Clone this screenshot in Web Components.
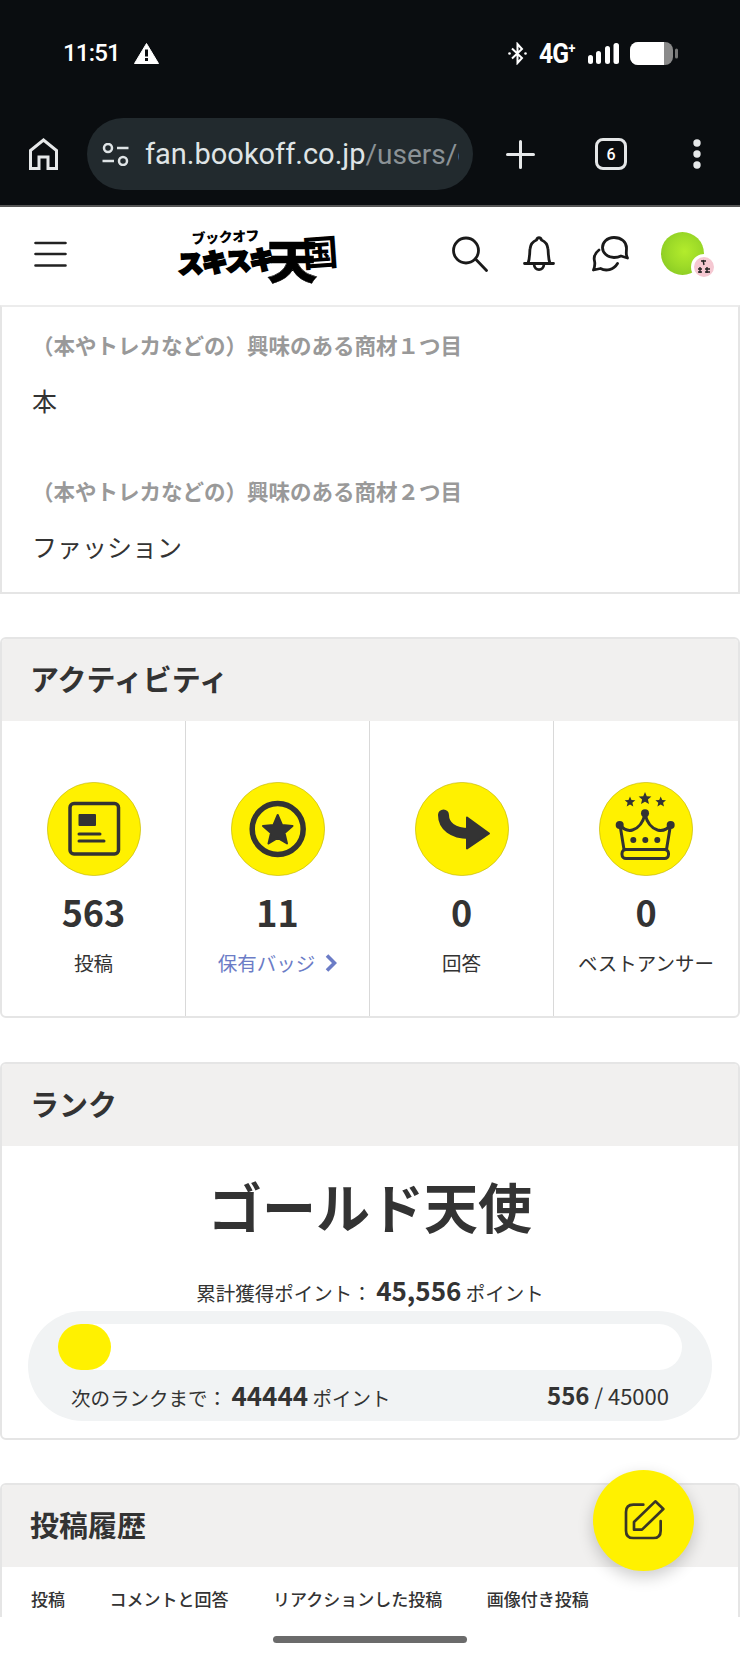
<!DOCTYPE html>
<html lang="ja">
<head>
<meta charset="utf-8">
<title>スキスキ天国</title>
<style>
    html, body { margin: 0; padding: 0; background: #fff; }
    body {
        width: 740px;
        height: 1661px;
        overflow: hidden;
        font-family: "Noto Sans CJK JP", "Noto Sans", sans-serif;
        color: #333;
    }
    #page { position: relative; display: flex; flex-direction: column; width: 740px; height: 1661px; overflow: hidden; }
    #scroll { display: flex; flex-direction: column; height: 1312px; overflow: hidden; flex: none; }
    browser-chrome, site-header { flex: none; }
    info-card, rank-card { margin-bottom: 43px; }
    activity-card { margin-bottom: 44px; }
</style>
</head>
<body>
<div id="page">
    <browser-chrome></browser-chrome>
    <site-header></site-header>
    <div id="scroll">
        <info-card>
            <info-row label="（本やトレカなどの）興味のある商材１つ目" value="本"></info-row>
            <info-row label="（本やトレカなどの）興味のある商材２つ目" value="ファッション"></info-row>
        </info-card>
        <activity-card>
            <activity-stat count="563" label="投稿" icon="post"></activity-stat>
            <activity-stat count="11" label="保有バッジ" icon="badge" link></activity-stat>
            <activity-stat count="0" label="回答" icon="answer"></activity-stat>
            <activity-stat count="0" label="ベストアンサー" icon="crown"></activity-stat>
        </activity-card>
        <rank-card></rank-card>
        <history-card></history-card>
    </div>
    <home-bar></home-bar>
    <post-fab></post-fab>
</div>

<script>
class BrowserChrome extends HTMLElement {
    constructor() {
        super();
        this.attachShadow({ mode: 'open' });
    }

    connectedCallback() {
        this.shadowRoot.innerHTML = /*html*/`
            <style>
                :host {
                    display: block;
                    height: 205px;
                    background: #0a0d10;
                    border-bottom: 2px solid #555;
                    font-family: Roboto, sans-serif;
                    color: #fff;
                }
                .status {
                    display: flex;
                    align-items: center;
                    height: 30px;
                    padding: 38px 0 0 63px;
                }
                .time { font-size: 24px; font-weight: 500; width: 71px; letter-spacing: -0.8px; }
                .right { display: flex; align-items: center; margin-left: auto; margin-right: 62px; }
                .net {
                    font-size: 28px;
                    font-weight: 700;
                    margin: 0 10px 0 12px;
                    width: 39px;
                    white-space: nowrap;
                    letter-spacing: -1px;
                    transform: scaleX(0.88);
                    transform-origin: left center;
                }
                .net sup { font-size: 15px; line-height: 0; vertical-align: 10px; }
                svg { display: block; flex: none; }
                .bar {
                    display: flex;
                    align-items: center;
                    height: 72px;
                    margin-top: 50px;
                    padding-left: 29px;
                }
                .pill {
                    display: flex;
                    align-items: center;
                    flex: none;
                    box-sizing: border-box;
                    width: 386px;
                    height: 72px;
                    margin-left: 29px;
                    padding-left: 15px;
                    border-radius: 36px;
                    background: #222a2e;
                }
                .url {
                    width: 314px;
                    margin-left: 16px;
                    overflow: hidden;
                    white-space: nowrap;
                    font-size: 29px;
                    color: #dfe4e6;
                }
                .url span { color: #8b9296; font-size: 28px; }
                .plus { margin-left: 33px; }
                .tabs {
                    display: flex;
                    align-items: center;
                    justify-content: center;
                    box-sizing: border-box;
                    width: 32px;
                    height: 32px;
                    margin-left: 60px;
                    border: 3px solid #e4e6e7;
                    border-radius: 8px;
                    font-size: 16px;
                    font-weight: 500;
                }
                .dots { margin-left: 66px; }
            </style>
            <div class="status">
                <div class="time">11:51</div>
                <svg width="25" height="21" viewBox="0 0 25 21"><path d="M12.500 0.500 L24.500 20.500 H0.500 Z" fill="#fff" stroke="#fff" stroke-linejoin="round"/><rect x="11" y="6.500" width="3" height="7" fill="#0a0d10"/><rect x="11" y="15" width="3" height="3" fill="#0a0d10"/></svg>
                <div class="right">
                    <svg width="19" height="23" viewBox="0 0 19 23" fill="none" stroke="#fff" stroke-width="2"><path d="M4 6.500 L14 16 L9.500 21 V2 L14 7 L4 16.500"/><circle cx="1.500" cy="11.500" r="1.300" fill="#fff" stroke="none"/><circle cx="17.500" cy="11.500" r="1.300" fill="#fff" stroke="none"/></svg>
                    <div class="net">4G<sup>+</sup></div>
                    <svg width="31" height="21" viewBox="0 0 31 21" fill="#fff"><rect x="0" y="12" width="5" height="9" rx="2.500"/><rect x="8" y="8" width="5" height="13" rx="2.500"/><rect x="17" y="3" width="5" height="18" rx="2.500"/><rect x="25.500" y="0" width="5.500" height="21" rx="2.500"/></svg>
                    <svg width="48" height="23" viewBox="0 0 48 23" style="margin-left:11px"><rect width="43" height="23" rx="8" fill="#8a8a8a"/><path d="M8 0 H34 V23 H8 A8 8 0 0 1 0 15 V8 A8 8 0 0 1 8 0 Z" fill="#fff"/><rect x="45" y="6.500" width="3" height="10" rx="1.500" fill="#777"/></svg>
                </div>
            </div>
            <div class="bar">
                <svg width="29" height="32" viewBox="0 0 29 32" fill="none" stroke="#e6e8e9" stroke-width="3"><path d="M1.500 30.500 V12.500 L14.500 2 L27.500 12.500 V30.500 H19 V19 H10 V30.500 Z" stroke-linejoin="miter"/></svg>
                <div class="pill">
                    <svg width="27" height="23" viewBox="0 0 27 23" fill="none" stroke="#dfe4e6" stroke-width="2.500"><circle cx="6" cy="5" r="4"/><path d="M15 5 H26.500"/><path d="M0.500 18 H12"/><circle cx="21" cy="18" r="4"/></svg>
                    <div class="url">fan.bookoff.co.jp<span>/users/c</span></div>
                </div>
                <svg class="plus" width="29" height="29" viewBox="0 0 29 29" stroke="#e6e8e9" stroke-width="3" stroke-linecap="round"><path d="M14.500 1.500 V27.500 M1.500 14.500 H27.500"/></svg>
                <div class="tabs">6</div>
                <svg class="dots" width="8" height="30" viewBox="0 0 8 30" fill="#e6e8e9"><circle cx="4" cy="4" r="3.700"/><circle cx="4" cy="15" r="3.700"/><circle cx="4" cy="26" r="3.700"/></svg>
            </div>
        `;
    }
}

class SiteHeader extends HTMLElement {
    constructor() {
        super();
        this.attachShadow({ mode: 'open' });
    }

    connectedCallback() {
        this.shadowRoot.innerHTML = /*html*/`
            <style>
                :host {
                    display: flex;
                    align-items: center;
                    box-sizing: border-box;
                    height: 98px;
                    background: #fff;
                    padding-left: 34px;
                    color: #111;
                }
                svg { display: block; flex: none; }
                .logo {
                    flex: none;
                    width: 160px;
                    height: 56px;
                    margin-left: 111px;
                    margin-top: 6px;
                    font-weight: 900;
                    color: #000;
                    white-space: nowrap;
                    line-height: 1;
                }
                .logo .top {
                    display: block;
                    font-size: 14px;
                    letter-spacing: -0.500px;
                    margin-left: 14px;
                    height: 14px;
                    transform: rotate(-3deg);
                    transform-origin: left bottom;
                }
                .logo .main { display: flex; align-items: flex-start; }
                .logo .suki {
                    font-size: 25px;
                    letter-spacing: -0.800px;
                    margin-top: 3px;
                    width: 93px;
                    -webkit-text-stroke: 2.500px #000;
                    transform: rotate(-3deg);
                }
                .logo .ten {
                    font-size: 46px;
                    margin-top: -10px;
                    margin-left: -4px;
                    width: 34px;
                    transform: scaleX(1.100);
                    transform-origin: left center;
                    -webkit-text-stroke: 0.500px #000;
                }
                .logo .koku {
                    font-size: 36px;
                    margin-top: -11px;
                    margin-left: 1px;
                    transform: rotate(-4deg);
                    font-weight: 700;
                    height: 33px;
                    line-height: 33px;
                }
                .tools { display: flex; align-items: center; margin-left: 114px; margin-top: -5px; }
                .avatar {
                    position: relative;
                    flex: none;
                    width: 43px;
                    height: 43px;
                    margin-left: 32px;
                    border-radius: 50%;
                    background: radial-gradient(circle at 55% 45%, #b3ec2c 0%, #9edb28 45%, #7fc221 100%);
                }
                .badge {
                    position: absolute;
                    left: 30px;
                    top: 22px;
                    width: 26px;
                    height: 26px;
                    box-sizing: border-box;
                    border: 3px solid #fff;
                    border-radius: 50%;
                    background: #f5c8d2;
                }
                .badge svg { width: 20px; height: 20px; }
            </style>
            <svg width="33" height="26" viewBox="0 0 33 26" stroke="#222" stroke-width="2.600" stroke-linecap="round" style="margin-top:-5px"><path d="M1.500 2 H31.500 M1.500 13 H31.500 M1.500 24.500 H31.500"/></svg>
            <div class="logo">
                <span class="top">ブックオフ</span>
                <span class="main"><span class="suki">スキスキ</span><span class="ten">天</span><span class="koku">国</span></span>
            </div>
            <div class="tools">
                <svg width="36" height="36" viewBox="0 0 36 36" fill="none" stroke="#1a1a1a" stroke-width="2.800" stroke-linecap="round"><circle cx="14" cy="14.500" r="12.500"/><path d="M23.500 23 L34.500 34.500"/></svg>
                <svg style="margin-left:35px" width="32" height="36" viewBox="0 0 32 36" fill="none" stroke="#1a1a1a" stroke-width="2.800" stroke-linecap="round" stroke-linejoin="round"><path d="M1.500 27.500 H30.500 M5 27.500 C7 22 6.500 17 7 13 C7.500 8 11 5 13.500 4 C14.500 1 17.500 1 18.500 4 C21 5 24.500 8 25 13 C25.500 17 25 22 27 27.500"/><path d="M11 28 C11.500 35.500 20.500 35.500 21 28"/></svg>
                <svg style="margin-left:37px" width="37" height="36" viewBox="0 0 37 36" fill="none" stroke="#1a1a1a" stroke-width="2.800" stroke-linecap="round" stroke-linejoin="round"><path d="M22 1.500 C14.500 1.500 10.500 7 10.500 11.500 C10.500 17 15.500 21.500 22 21.500 C25 21.500 27 21 29 20 L35.500 22 C33.500 19 34.500 17 34.500 12 C34.500 6 29.500 1.500 22 1.500 Z"/><path d="M7 14 C3 17 1.500 21 2.500 25 C3 27 3 30 1.500 34 L8.500 32.500 C14 35.500 21.500 34 25.500 27.500"/></svg>
                <div class="avatar">
                    <div class="badge"><svg viewBox="0 0 20 20" stroke="#222" stroke-width="1.400" fill="none"><path d="M9 3 L10 8 M7 4 H12 M4 12 H8 M4 15 H8 M11 12 H16 M11 15 H16 M6 10 V16 M13 10 V16"/></svg></div>
                </div>
            </div>
        `;
    }
}

const cardStyles = /*css*/`
    :host {
        display: block;
        flex: none;
        box-sizing: border-box;
        background: #fff;
        border: 2px solid #e5e5e5;
        border-radius: 6px;
        overflow: hidden;
    }
    h2 {
        display: flex;
        align-items: center;
        box-sizing: border-box;
        height: 82px;
        margin: 0;
        padding: 0 0 4px 28px;
        background: #f1f0ef;
        font-size: 29px;
        font-weight: 700;
        color: #333;
    }
`;

class InfoCard extends HTMLElement {
    constructor() {
        super();
        this.attachShadow({ mode: 'open' });
    }

    connectedCallback() {
        this.shadowRoot.innerHTML = /*html*/`
            <style>
                :host {
                    display: flex;
                    flex-direction: column;
                    gap: 56px;
                    flex: none;
                    box-sizing: border-box;
                    height: 289px;
                    padding: 23px 30px 0;
                    background: #fff;
                    border: 2px solid #e5e5e5;
                    border-top-color: #ececec;
                }
            </style>
            <slot></slot>
        `;
    }
}

class InfoRow extends HTMLElement {
    constructor() {
        super();
        this.attachShadow({ mode: 'open' });
    }

    connectedCallback() {
        this.shadowRoot.innerHTML = /*html*/`
            <style>
                :host { display: block; }
                .label { font-size: 21.500px; line-height: 30px; font-weight: 700; color: #999; white-space: nowrap; }
                .value { font-size: 25px; line-height: 40px; margin-top: 20px; color: #333; }
            </style>
            <div class="label">${this.getAttribute('label')}</div>
            <div class="value">${this.getAttribute('value')}</div>
        `;
    }
}

class ActivityCard extends HTMLElement {
    constructor() {
        super();
        this.attachShadow({ mode: 'open' });
    }

    connectedCallback() {
        this.shadowRoot.innerHTML = /*html*/`
            <style>
                ${cardStyles}
                :host { height: 381px; }
                .grid { display: grid; grid-template-columns: repeat(4, 1fr); height: 297px; }
            </style>
            <h2>アクティビティ</h2>
            <div class="grid"><slot></slot></div>
        `;
    }
}

const statIcons = {
    post: /*html*/`
        <rect x="23" y="21.500" width="48.500" height="50.500" rx="4" fill="none" stroke="#333" stroke-width="3.500"/>
        <rect x="31.500" y="32" width="17.500" height="12" rx="1" fill="#333"/>
        <path d="M32 52 H53 M32 59 H57" stroke="#333" stroke-width="3" stroke-linecap="round"/>`,
    badge: /*html*/`
        <circle cx="46.700" cy="47" r="25.500" fill="none" stroke="#333" stroke-width="5.500"/>
        <path d="M46.700 33 L51 43 L61.500 44 L53.500 51 L56 61.500 L46.700 56 L37.500 61.500 L40 51 L32 44 L42.500 43 Z" fill="#333" stroke="#333" stroke-width="2" stroke-linejoin="round"/>`,
    answer: /*html*/`
        <path d="M28.500 33 C28.500 44 38 51.500 54 51.500" fill="none" stroke="#333" stroke-width="11" stroke-linecap="round"/>
        <path d="M52 35.500 L74 51.500 L52 66.500 Z" fill="#333" stroke="#333" stroke-width="2" stroke-linejoin="round"/>`,
    crown: /*html*/`
        <g fill="#333">
            <path d="M31 14.500 L32.500 18 L36.300 18.300 L33.400 20.800 L34.300 24.500 L31 22.500 L27.700 24.500 L28.600 20.800 L25.700 18.300 L29.500 18 Z"/>
            <path d="M46 10 L47.800 14.200 L52.400 14.600 L48.900 17.600 L50 22 L46 19.700 L42 22 L43.100 17.600 L39.600 14.600 L44.200 14.200 Z"/>
            <path d="M61.700 14.500 L63.200 18 L67 18.300 L64.100 20.800 L65 24.500 L61.700 22.500 L58.400 24.500 L59.300 20.800 L56.400 18.300 L60.200 18 Z"/>
            <circle cx="46" cy="31.300" r="4"/><circle cx="20.700" cy="43" r="4"/><circle cx="71.700" cy="43" r="4"/>
            <circle cx="34.300" cy="58" r="3"/><circle cx="46.300" cy="58" r="3"/><circle cx="58.300" cy="58" r="3"/>
        </g>
        <path d="M21 43 Q27 50 33.500 48 Q43 45 46 32 Q49 45 58.500 48 Q66 50 71.500 43 L67.500 67.500 H25 Z" fill="none" stroke="#333" stroke-width="3" stroke-linejoin="round"/>
        <rect x="23" y="67.500" width="46.500" height="9" rx="4" fill="none" stroke="#333" stroke-width="3"/>`
};

class ActivityStat extends HTMLElement {
    constructor() {
        super();
        this.attachShadow({ mode: 'open' });
    }

    connectedCallback() {
        const isLink = this.hasAttribute('link');
        this.shadowRoot.innerHTML = /*html*/`
            <style>
                :host {
                    display: flex;
                    flex-direction: column;
                    align-items: center;
                    padding-top: 61px;
                    border-right: 1px solid #d9d9d9;
                    color: #333;
                }
                :host(:last-child) { border-right: 0; }
                svg.icon { display: block; width: 94px; height: 94px; }
                .count { font-size: 36px; font-weight: 700; line-height: 50px; margin-top: 10px; }
                .label {
                    display: flex;
                    align-items: center;
                    gap: 10px;
                    font-size: 19.500px;
                    line-height: 30px;
                    margin-top: 12px;
                    white-space: nowrap;
                }
                .label.link { color: #6b7cc6; }
            </style>
            <svg class="icon" viewBox="0 0 94 94">
                <circle cx="47" cy="47" r="46.600" fill="#fff100" stroke="#bdb100" stroke-width="0.600"/>
                ${statIcons[this.getAttribute('icon')]}
            </svg>
            <div class="count">${this.getAttribute('count')}</div>
            <div class="label ${isLink ? 'link' : ''}">${this.getAttribute('label')}${isLink ? '<svg width="12" height="18" viewBox="0 0 12 18" fill="none" stroke="#6b7cc6" stroke-width="3.600"><path d="M2 1.500 L9.500 9 L2 16.500"/></svg>' : ''}</div>
        `;
    }
}

class RankCard extends HTMLElement {
    constructor() {
        super();
        this.attachShadow({ mode: 'open' });
    }

    connectedCallback() {
        this.shadowRoot.innerHTML = /*html*/`
            <style>
                ${cardStyles}
                :host { height: 378px; }
                .name {
                    margin-top: 25px;
                    font-size: 54px;
                    font-weight: 700;
                    line-height: 70px;
                    text-align: center;
                    color: #333;
                }
                .total {
                    margin-top: 34px;
                    font-size: 19.500px;
                    line-height: 30px;
                    text-align: center;
                    white-space: nowrap;
                }
                b { font-weight: 700; font-size: 26px; }
                .panel {
                    box-sizing: border-box;
                    height: 110px;
                    margin: 3px 26px 0;
                    padding: 13px 30px 0;
                    border-radius: 55px;
                    background: #f1f3f4;
                }
                .track { height: 46px; border-radius: 23px; background: #fff; }
                .fill { width: 53px; height: 46px; border-radius: 23px; background: #fff100; }
                .next {
                    display: flex;
                    justify-content: space-between;
                    margin-top: 10px;
                    padding: 0 13px;
                    font-size: 19.500px;
                    line-height: 30px;
                    white-space: nowrap;
                }
                .goal { font-size: 22px; }
                .goal b { font-size: 24px; }
            </style>
            <h2>ランク</h2>
            <div class="name">ゴールド天使</div>
            <div class="total">累計獲得ポイント： <b>45,556</b> ポイント</div>
            <div class="panel">
                <div class="track"><div class="fill"></div></div>
                <div class="next">
                    <span>次のランクまで： <b>44444</b> ポイント</span>
                    <span class="goal"><b>556</b> / 45000</span>
                </div>
            </div>
        `;
    }
}

class HistoryCard extends HTMLElement {
    constructor() {
        super();
        this.attachShadow({ mode: 'open' });
    }

    connectedCallback() {
        this.shadowRoot.innerHTML = /*html*/`
            <style>
                ${cardStyles}
                :host { height: 220px; }
                .tabs {
                    display: flex;
                    gap: 44.500px;
                    padding: 17px 0 0 29px;
                    font-size: 17px;
                    font-weight: 500;
                    line-height: 30px;
                    white-space: nowrap;
                    color: #333;
                }
            </style>
            <h2>投稿履歴</h2>
            <div class="tabs">
                <span>投稿</span>
                <span>コメントと回答</span>
                <span>リアクションした投稿</span>
                <span>画像付き投稿</span>
            </div>
        `;
    }
}

class HomeBar extends HTMLElement {
    constructor() {
        super();
        this.attachShadow({ mode: 'open' });
    }

    connectedCallback() {
        this.shadowRoot.innerHTML = /*html*/`
            <style>
                :host { display: flex; justify-content: center; flex: 1; background: #fff; padding-top: 19px; }
                div { width: 194px; height: 7px; border-radius: 4px; background: #6b6b6b; }
            </style>
            <div></div>
        `;
    }
}

class PostFab extends HTMLElement {
    constructor() {
        super();
        this.attachShadow({ mode: 'open' });
    }

    connectedCallback() {
        this.shadowRoot.innerHTML = /*html*/`
            <style>
                :host {
                    position: absolute;
                    left: 593px;
                    top: 1470px;
                    width: 101px;
                    height: 101px;
                    border-radius: 50%;
                    background: #fff100;
                    box-shadow: 0 6px 16px rgba(0, 0, 0, 0.2);
                }
                svg { display: block; }
            </style>
            <svg width="101" height="101" viewBox="39 30 303 303" fill="none" stroke="#3a3626" stroke-width="8" stroke-linecap="round" stroke-linejoin="round">
                <path d="M190 134 H160 Q138 134 138 156 V212 Q138 234 160 234 H220 Q242 234 242 212 V183"/>
                <path d="M162 209 V186 L226 124 L250 147 L186 209 Z"/>
            </svg>
        `;
    }
}

customElements.define('browser-chrome', BrowserChrome);
customElements.define('site-header', SiteHeader);
customElements.define('info-card', InfoCard);
customElements.define('info-row', InfoRow);
customElements.define('activity-card', ActivityCard);
customElements.define('activity-stat', ActivityStat);
customElements.define('rank-card', RankCard);
customElements.define('history-card', HistoryCard);
customElements.define('home-bar', HomeBar);
customElements.define('post-fab', PostFab);
</script>
</body>
</html>
